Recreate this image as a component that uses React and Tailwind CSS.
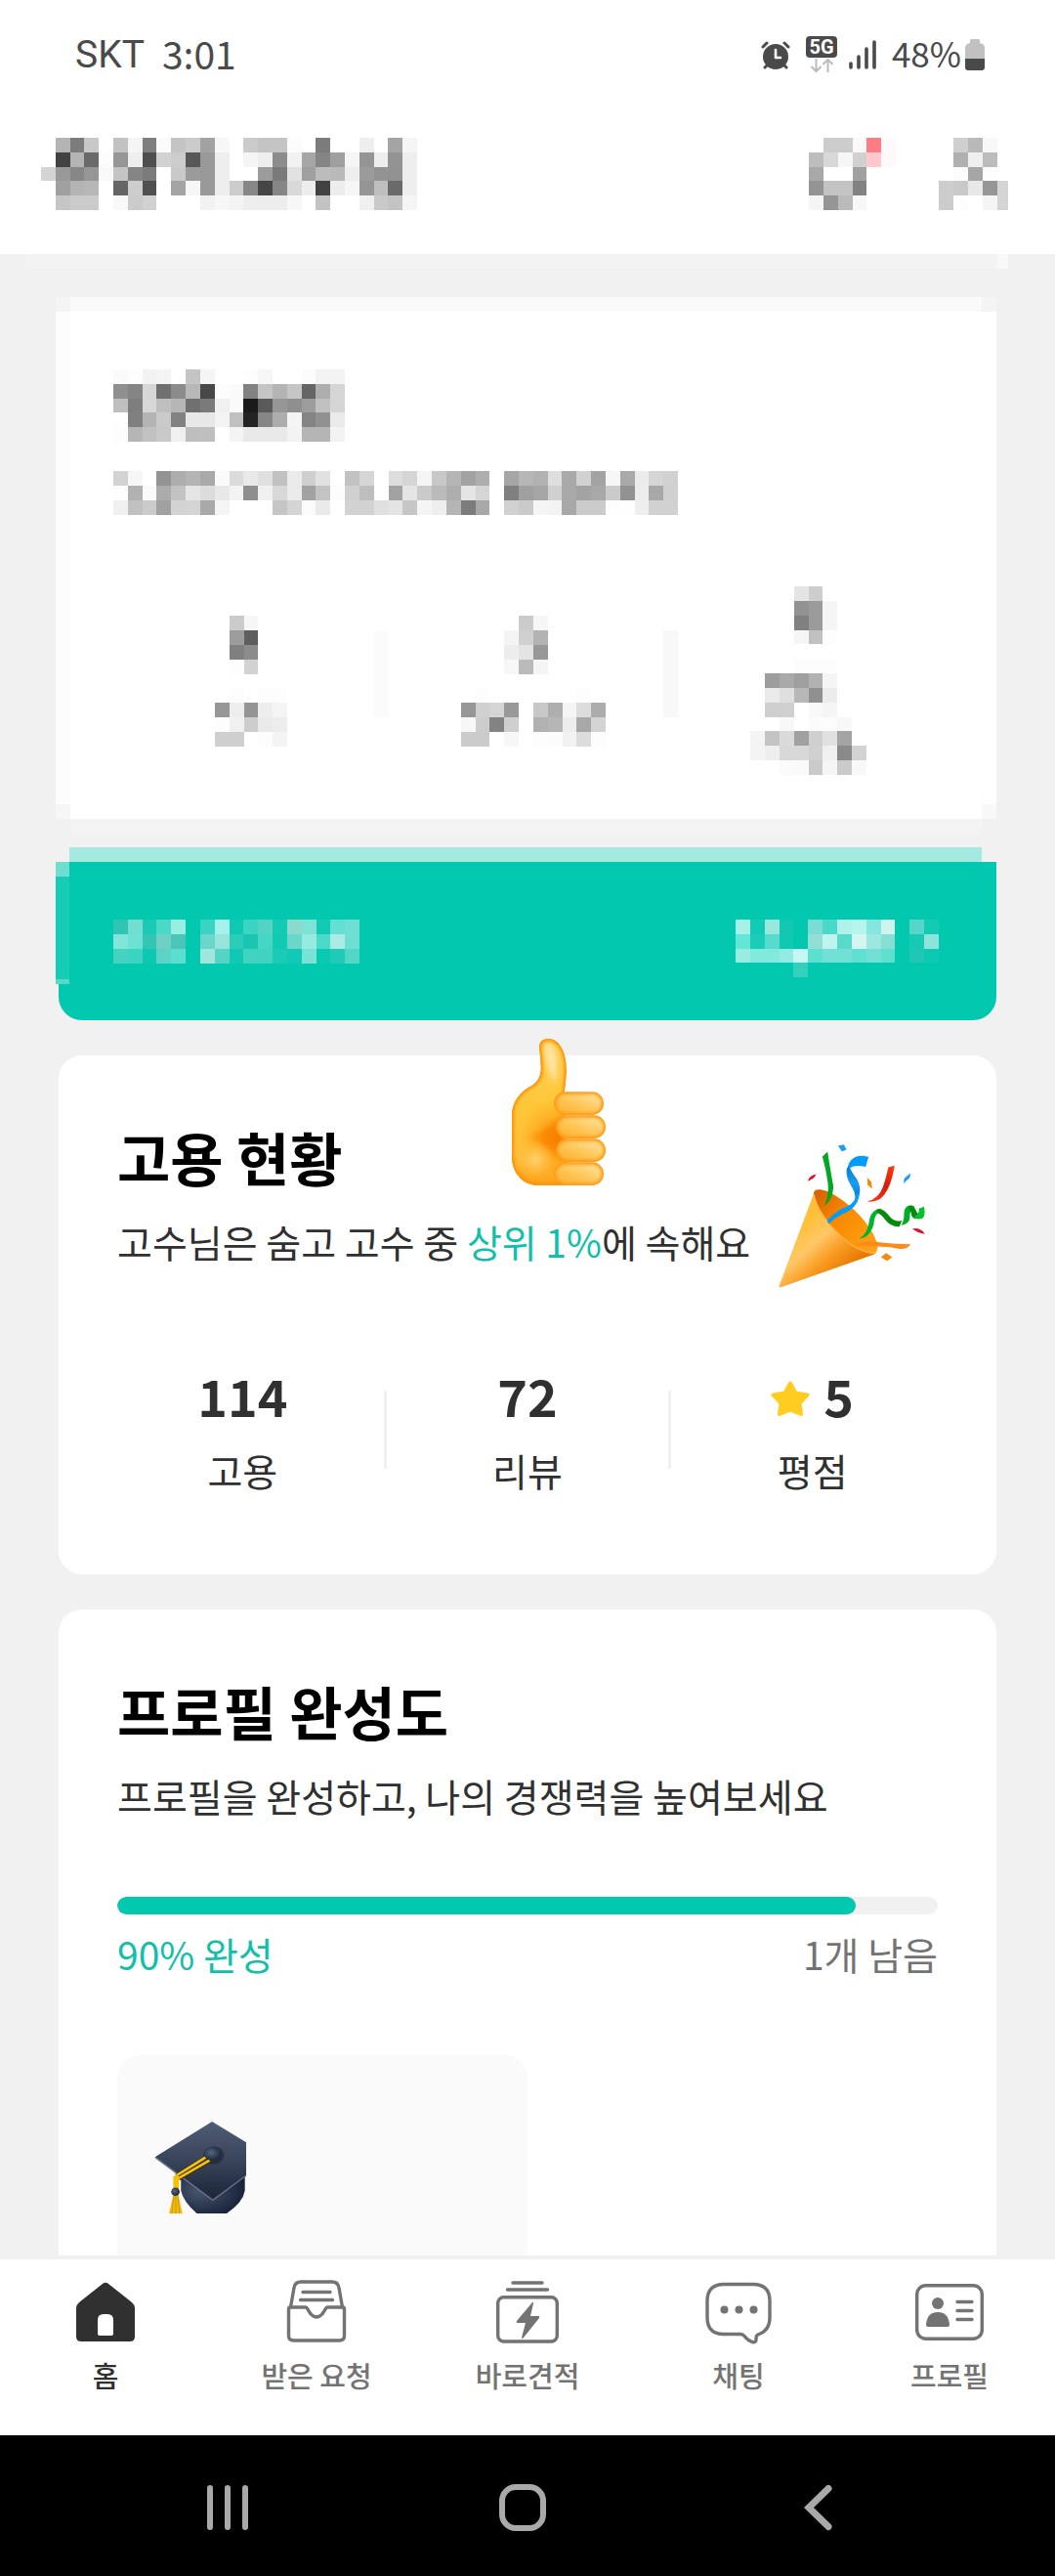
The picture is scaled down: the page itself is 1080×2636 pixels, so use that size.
import React from "react";

/* ---------- Pixelated blocks for private content ---------- */

const toColor = (v) => (v.length === 2 ? `#${v}${v}${v}` : `#${v}`);

function Mosaic({ rows, className }) {
  const cells = rows.map((r) => r.trim().split(/\s+/));
  const cols = Math.max(...cells.map((r) => r.length));
  return (
    <svg
      aria-hidden="true"
      viewBox={`0 0 ${cols} ${cells.length}`}
      preserveAspectRatio="none"
      shapeRendering="crispEdges"
      className={`block shrink-0 ${className}`}
    >
      {cells.map((row, y) =>
        row.map((v, x) =>
          v === "--" ? null : (
            <rect key={`${x}-${y}`} x={x} y={y} width="1" height="1" fill={toColor(v)} />
          )
        )
      )}
    </svg>
  );
}

const NAME = [
  "-- b4 7c c8 -- c2 f5 7f fb c4 cb a2 f7 -- cb c4 c4 fc -- 7c -- -- ee -- a4 f5",
  "-- 42 b4 6a fc 96 ee 4f d2 cc 57 99 ee -- f5 ee 8c f2 a6 85 9f f5 95 ee 93 ee",
  "d4 99 87 96 f9 c4 85 7b -- c9 9b 99 ee -- -- 9c 7a e2 9f bc b9 ee 9b 93 92 ee",
  "-- a0 b4 b7 -- 65 cc 50 -- a4 f6 99 ee cc 87 45 86 d9 ed 42 ed f6 95 bf 6a ee",
  "-- c6 cb cb -- f8 cb d1 -- -- -- f2 f7 f4 ed ed ed f7 -- c3 -- -- f0 c9 c3 f5",
];
const BELL = [
  "-- cc cc fdf8f8 ff7b85 fff9fb",
  "bd d8 f6 d2cfcf ffc8cc fff9fb",
  "a8 -- -- a1 -- --",
  "94 c3 c3 82 -- --",
  "f5 95 ba f7 -- --",
];
const PERSON = ["-- cf b9 f8", "-- b0 ef bc", "-- fc a6 fd", "cd c9 e8 96", "cc fd -- f5"];
const PERSON_EDGE = ["--", "--", "--", "d4", "d4"];
const SUMMARY_TITLE = [
  "fa fd f2 f4 -- c4 f5 -- -- fd f6 -- -- fc f3 f3",
  "8f 85 d7 70 8b b8 48 fc fa 82 c5 b4 c6 65 ae d5",
  "bf 7e d7 bf b6 70 7a f0 fa 1a 5a 96 8f 9c c0 d5",
  "-- 80 b4 ca 82 e8 e8 f3 c0 24 86 ad f4 84 91 ea",
  "fd b6 c1 c9 f0 be bf -- f4 e9 e9 e9 f3 b5 b5 f3",
];
const SUMMARY_TEXT = [
  "d3 f6 -- 93 ad b4 a9 fa db e9 e0 c1 eb cf e1 -- c2 d5 -- dd d5 f5 c8 b5 a2 ae -- a6 b6 b1 de a9 d1 a3 f6 a9 eb d5 d1",
  "fd b1 fa ab c2 e5 dc e8 f3 8f f0 d8 eb a2 c3 fc d0 be -- a2 e5 ca ba ae e5 d5 -- 80 a0 a6 d0 a9 a3 a8 cb 92 ec a8 d0",
  "f0 c1 cb a1 d3 d4 a9 f5 -- -- -- c6 d4 fb ea -- d2 d2 e0 e4 c6 f5 ee b5 7c a8 -- d1 ca f5 f3 a8 cb cb fd fe ee d1 d1",
];
const STAT_A = [
  "-- -- cb f6 -- --",
  "-- -- 9c 5e -- --",
  "-- -- 80 8c -- --",
  "-- -- fd d2 -- --",
  "-- -- -- -- -- --",
  "-- -- fd -- fd fd",
  "-- 96 ed 94 ed f4",
  "-- fd f0 cd ea ed",
  "-- cf cf -- fd f4",
];
const STAT_B = [
  "-- -- -- -- -- cb f6 -- -- -- --",
  "-- -- -- -- f4 d0 b3 -- -- -- --",
  "-- -- -- -- ed e4 98 -- -- -- --",
  "-- -- -- -- f7 ba f5 -- -- -- --",
  "-- -- -- -- -- -- -- -- -- -- --",
  "-- -- fd -- -- -- -- -- -- fd --",
  "-- 96 d0 d5 99 -- c8 ae f5 dd ac",
  "-- f7 cd 83 cf -- b1 b6 ed a8 d4",
  "-- cb cb -- f7 -- fd fc f2 dc fd",
];
const STAT_C = [
  "-- -- -- e4 cd -- -- --",
  "-- -- -- 92 9b f5 -- --",
  "-- -- -- 80 9b f5 -- --",
  "-- -- -- f6 c1 fd -- --",
  "-- -- -- -- -- -- -- --",
  "-- -- -- fd fd fd -- --",
  "-- 9d a9 9f b1 f5 -- --",
  "-- ea df b7 90 ec -- --",
  "-- cf cf -- f8 f5 -- --",
  "-- -- f8 -- fb fc f8 --",
  "f4 c3 da a1 cf e1 a4 --",
  "f4 ee d8 d8 d0 f0 8a d3",
  "-- -- fb fa ca f5 ca f8",
];
const CASH_LABEL = [
  "2fc5b3 72ddd1 1bcab6 4ad8c8 99eee3 -- 3bd3c1 a5f2ec 10c9b4 3bd3c1 53d3c3 13cab5 8cd9ce 7ee2d6 11cab4 65dfd3 6fdfd4",
  "82e5da 6ce1d4 34c6b5 6fd1c5 4ac5b7 -- 6bd7ca 96e4db 2bcdba 1ac6b1 45d6c4 11cab4 6bd7ca 94ebe0 4bdac9 a8ece4 6fdfd4",
  "45d3c1 3bd3c1 0dc9b3 5dd2c5 58dfcf -- a0e6dd 55d3c4 10c9b4 40d3c1 40d3c1 1bcab7 11c9b4 78e2d6 08c9b1 1fcbb8 52d6c7",
];
const CASH_VALUE = [
  "a6f0e8 13cab5 99e8df 13c8b3 -- 7adcd2 4ad8c8 aff2ea b5f5ee 86e5dc cdf5f0 -- 55d6c8 13cab5",
  "62e6d6 1bcdb8 55dccc 10c9b3 -- 94dfd5 bff3ed 58dacb d3f6f2 9ce7df 86ded4 -- 1ac9b5 8ce4da",
  "99ece2 82eadd 82eadd 94ebe1 c4f7f1 5ddfcf 72e0d4 72e0d4 5fe0d0 72e0d4 5fe0cf -- 1ec8b5 0bc9b3",
  "-- -- -- -- 33d0be -- -- -- -- -- -- -- -- --",
];

/* ---------- Status bar ---------- */

function StatusBar() {
  return (
    <div className="flex h-28 items-center justify-between pl-[77px] pr-[72px] text-[#4a4a4a]">
      <div className="flex items-center gap-[18px]">
        <span className="font-[Roboto,sans-serif] text-[39px] leading-[44px]">SKT</span>
        <span className="pb-1 text-[39px] leading-[44px]">3:01</span>
      </div>
      <div className="flex items-center">
        <svg viewBox="0 0 30 30" className="mr-4 h-[30px] w-[30px]" aria-hidden="true">
          <circle cx="15" cy="17" r="13" fill="#4a4a4a" />
          <path d="M2 7 6 3M28 7l-4-4M4 28l4-4M26 28l-4-4" stroke="#4a4a4a" strokeWidth="3" strokeLinecap="round" />
          <path d="M15 10v8h5" fill="none" stroke="#fff" strokeWidth="2.6" strokeLinecap="round" strokeLinejoin="round" />
        </svg>
        <svg viewBox="0 0 32 38" className="mr-3 h-[38px] w-8" aria-hidden="true">
          <rect width="32" height="22" rx="4" fill="#4a4a4a" />
          <text x="16" y="18" textAnchor="middle" fontFamily="Roboto" fontWeight="700" fontSize="20" fill="#fff">5G</text>
          <path d="M10.500 23v13m-5-5 5 5 5-5M22.500 37V24m-5 5 5-5 5 5" fill="none" stroke="#bcbcbc" strokeWidth="2" />
        </svg>
        <svg viewBox="0 0 28 30" className="mr-4 h-[30px] w-7" aria-hidden="true">
          <path d="M2 24v4M10 17v11M18 9v19M26 2v26" stroke="#4a4a4a" strokeWidth="3.600" strokeLinecap="round" />
        </svg>
        <span className="mr-1 pb-1 text-[35px] leading-[44px]">48%</span>
        <svg viewBox="0 0 20 32" className="h-8 w-5" aria-hidden="true">
          <path d="M5 1.500Q5 0 6.500 0h7Q15 0 15 1.500V4q5 1 5 5v11H0V9q0-4 5-5z" fill="#c1c1c1" />
          <path d="M0 20h20v9q0 3-3 3H3q-3 0-3-3z" fill="#4a4a4a" />
        </svg>
      </div>
    </div>
  );
}

/* ---------- Illustrations ---------- */

const THUMB_BODY =
  "M217 102C213 80 226 69 244 69c32 0 56 39 55 96-1 35-4 50-6 72l12 282h-92c-48 0-81-39-81-89V305c0-42 24-74 63-93 21-14 29-36 26-62 0-20-3-33-4-48z";

function ThumbsUp({ className }) {
  return (
    <svg viewBox="132 69 288 450" className={className} aria-hidden="true">
      <defs>
        <linearGradient id="tu-finger" x1="0" y1="1" x2="1" y2="0">
          <stop offset="0" stopColor="#ffb02e" />
          <stop offset="0.450" stopColor="#ffc656" />
          <stop offset="1" stopColor="#ffe3a0" />
        </linearGradient>
        <linearGradient id="tu-body" x1="0" y1="0" x2="0" y2="1">
          <stop offset="0" stopColor="#ffd45e" />
          <stop offset="0.450" stopColor="#ffc638" />
          <stop offset="0.800" stopColor="#ffbe3a" />
          <stop offset="1" stopColor="#ff9c12" />
        </linearGradient>
        <radialGradient id="tu-shade" cx="275" cy="372" r="120" gradientUnits="userSpaceOnUse">
          <stop offset="0" stopColor="#f57c00" />
          <stop offset="0.400" stopColor="#fb8700" stopOpacity="0.800" />
          <stop offset="1" stopColor="#ff9800" stopOpacity="0" />
        </radialGradient>
        <radialGradient id="tu-palm" cx="205" cy="440" r="55" gradientUnits="userSpaceOnUse">
          <stop offset="0" stopColor="#ffd272" />
          <stop offset="1" stopColor="#ffc044" stopOpacity="0" />
        </radialGradient>
        <filter id="tu-soft" x="-20%" y="-20%" width="140%" height="140%">
          <feGaussianBlur stdDeviation="8" />
        </filter>
        <filter id="tu-rim" x="-20%" y="-20%" width="140%" height="140%">
          <feGaussianBlur stdDeviation="4" />
        </filter>
        <clipPath id="tu-clip">
          <path d={THUMB_BODY} />
        </clipPath>
      </defs>
      <g clipPath="url(#tu-clip)">
        <rect x="130" y="60" width="200" height="470" fill="url(#tu-body)" />
        <path d="M234 95c2-16 20-14 28 8 10 26 10 60 2 100-14-24-30-60-30-108z" fill="#ffe4a4" filter="url(#tu-soft)" />
        <path d="M160 368q60 0 130-70v160q-60-80-130-90z" fill="url(#tu-shade)" filter="url(#tu-soft)" />
        <circle cx="275" cy="372" r="120" fill="url(#tu-shade)" opacity="0.600" />
        <circle cx="205" cy="440" r="55" fill="url(#tu-palm)" />
        <path d={THUMB_BODY} fill="none" stroke="#ff930a" strokeWidth="14" filter="url(#tu-rim)" />
        <path d={THUMB_BODY} fill="none" stroke="#ff980f" strokeWidth="5" />
      </g>
      {[[261, 232], [267, 304], [267, 376], [261, 448]].map(([x, y]) => (
        <g key={y}>
          <rect x={x} y={y} width="153" height="71" rx="35" fill="#ff9a14" />
          <rect x={x + 7} y={y + 7} width="139" height="57" rx="28" fill="url(#tu-finger)" filter="url(#tu-rim)" />
        </g>
      ))}
    </svg>
  );
}

function PartyPopper({ className }) {
  return (
    <svg viewBox="950 393 451 441" className={className} aria-hidden="true">
      <defs>
        <linearGradient id="pp-cone" x1="1020" y1="640" x2="1150" y2="790" gradientUnits="userSpaceOnUse">
          <stop offset="0" stopColor="#ffc038" />
          <stop offset="0.350" stopColor="#ffc766" />
          <stop offset="0.650" stopColor="#f99d22" />
          <stop offset="1" stopColor="#e87700" />
        </linearGradient>
        <linearGradient id="pp-in" x1="1060" y1="560" x2="1250" y2="720" gradientUnits="userSpaceOnUse">
          <stop offset="0" stopColor="#d96500" />
          <stop offset="0.400" stopColor="#f98a00" />
          <stop offset="1" stopColor="#ffa41c" />
        </linearGradient>
        <linearGradient id="pp-blue" x1="0" y1="0" x2="0" y2="1">
          <stop offset="0" stopColor="#0078dc" />
          <stop offset="0.500" stopColor="#18a0ec" />
          <stop offset="1" stopColor="#0072d2" />
        </linearGradient>
        <linearGradient id="pp-red" x1="1300" y1="460" x2="1240" y2="570" gradientUnits="userSpaceOnUse">
          <stop offset="0" stopColor="#ff3a0a" />
          <stop offset="0.500" stopColor="#d81a08" />
          <stop offset="1" stopColor="#f43a1c" />
        </linearGradient>
      </defs>
      <path d="M1058 545c0-20 32-17 67 5 65 40 122 105 130 155 2 20-10 28-40 17-65-22-145-112-157-177z" fill="url(#pp-in)" />
      <path d="M1058 545c12 65 92 155 157 177 20 7 33 6 38 0l-8 9-290 102-4-3z" fill="url(#pp-cone)" />
      <path d="M1058 545c12 65 92 155 157 177 18 6 30 6 36 3" fill="none" stroke="#ffb24e" strokeWidth="4" />
      <path d="M1085 430l16-15q9 60 18 108-2 40-29 59 16-34 12-70-6-44-17-82z" fill="#00a824" />
      <path d="M1160 480q4-54 50-52l17 3-9 31q-32-8-50 4z" fill="#009dff" />
      <path d="M1160 466q-4 26 12 52 16 22 14 46l12-14q8-26-8-52-18-24-22-38z" fill="url(#pp-blue)" />
      <path d="M1198 540q4 34-32 58-44 20-62 40l-4-12q28-30 64-44 24-14 24-34z" fill="#009dff" />
      <path d="M1288 463l19-5q-12 78-46 104-20 10-39 6 36-6 50-46 9-26 16-59z" fill="url(#pp-red)" />
      <path d="M1199 682q26-14 30-54 6-38 40-38l-14 14q-10 10-12 34-12 42-44 44z" fill="#00b52e" />
      <path d="M1254 592q18-4 34 18 20 26 42 16l-8 20q-26 2-46-24-12-16-24-18z" fill="#058a0c" />
      <path d="M1328 642q10-20 8-36 0-24 22-26l12 4q-18 10-16 34 0 18-26 24z" fill="#00ad2a" />
      <path d="M1350 582q18-2 24 16 4 12 10 8l-8 14q-16 4-18-16z" fill="#058a0c" />
      <path d="M1382 590l16-6q6 36-10 38-16 2-20-8 16-4 14-24z" fill="#00c22e" />
      <path d="M1180 704q38-20 80-10 50 6 96 6-8 16-34 14-40-8-142-10z" fill="#ff8a14" />
      <path d="M1133 397l18-4 8 16-14 5z" fill="#1c9cf2" />
      <path d="M1337 497l19-16-2 14-19 18z" fill="#1c9cf2" />
      <path d="M1223 495l13 14 2 20-14-12z" fill="#f68a0c" />
      <path d="M1265 740l16-13 19 13-16 11z" fill="#f68a0c" />
      <path d="M1040 506q4-18 26-22-6 14-26 22z" fill="#dc1028" />
      <path d="M1362 652q26-4 38 16-22-2-38-16z" fill="#e01030" />
    </svg>
  );
}

function GraduationCap({ className }) {
  return (
    <svg viewBox="175 272 281 283" className={className} aria-hidden="true">
      <defs>
        <linearGradient id="gc-top" x1="0" y1="0" x2="0" y2="1">
          <stop offset="0" stopColor="#4e5c74" />
          <stop offset="0.500" stopColor="#38445a" />
          <stop offset="1" stopColor="#1c2436" />
        </linearGradient>
        <radialGradient id="gc-base" cx="0.300" cy="0.400" r="0.800">
          <stop offset="0" stopColor="#46566e" />
          <stop offset="0.600" stopColor="#27334a" />
          <stop offset="1" stopColor="#141c30" />
        </radialGradient>
        <radialGradient id="gc-knob" cx="0.400" cy="0.400" r="0.600">
          <stop offset="0" stopColor="#566580" />
          <stop offset="1" stopColor="#1f293c" />
        </radialGradient>
      </defs>
      <path d="M256 440h197v45q-6 36-56 70h-92q-42-36-49-70z" fill="url(#gc-base)" />
      <path d="M176 381L352 272l180 110-178 133z" fill="url(#gc-top)" />
      <path d="M178 383l176 131 178-131" fill="none" stroke="#66738a" strokeWidth="4" />
      <ellipse cx="357" cy="376" rx="32" ry="27" fill="#141c2c" opacity="0.500" />
      <path d="M242 440L338 382M249 447L348 390" fill="none" stroke="#3c3218" strokeWidth="15" />
      <path d="M241 478V439L332 382M249 446L344 391" fill="none" stroke="#f8c210" strokeWidth="8" />
      <path d="M241 480V440" stroke="#f9c000" strokeWidth="17" />
      <path d="M233 495h14l14 60h-42z" fill="#f3bd10" />
      <path d="M234 500l-6 55M240 498v57M246 500l6 55" stroke="#c89408" strokeWidth="3" />
      <ellipse cx="354" cy="372" rx="26" ry="20" fill="url(#gc-knob)" />
      <circle cx="239" cy="488" r="13" fill="url(#gc-knob)" />
    </svg>
  );
}

function Star() {
  return (
    <svg viewBox="0 -6 40 42" className="h-[42px] w-10" aria-hidden="true">
      <path
        d="M20 2.500 25.500 12.500 37.500 14.500 29.500 23 31 34 20 29.500 9 34 10.500 23 2.500 14.500 14.500 12.500z"
        fill="#ffcd22"
        stroke="#ffcd22"
        strokeWidth="4"
        strokeLinejoin="round"
      />
    </svg>
  );
}

/* ---------- Tab icons ---------- */

const line = { fill: "none", stroke: "#737373", strokeWidth: 3.4, strokeLinecap: "round", strokeLinejoin: "round" };

const icons = {
  home: (
    <path
      fillRule="evenodd"
      fill="#303030"
      d="M33 7q3-2.500 6 0l24 19q3 2.500 3 6v29q0 5-5 5H11q-5 0-5-5V32q0-3.500 3-6zM28 58q0 2 2 2h12q2 0 2-2V44q0-6-6-6h-4q-6 0-6 6z"
    />
  ),
  inbox: (
    <g {...line}>
      <path d="M9 31q-1.500 0-1.500 2v27q0 5 5 5h47q5 0 5-5V33q0-2-1.500-2H47q-1 0-2 2-4 8-9 8t-9-8q-1-2-2-2z" />
      <path d="M9.500 31 13 11q1-6 7-6h32q6 0 7 6l3.500 20M22 15.500h28M19.500 23.500h33" />
    </g>
  ),
  quote: (
    <g>
      <path {...line} d="M21 6h30M15.500 13h41" />
      <rect {...line} x="5.700" y="20.700" width="60.600" height="45.300" rx="6" />
      <path d="M41 26 25 45q-1 2 1 2h8l-4 15q0 2 2 0l16-20q1-2-1-2h-8l3-13q0-2-1-1z" fill="#737373" />
    </g>
  ),
  chat: (
    <g>
      <path
        {...line}
        d="M21 7.500h30q17 0 17 17v17q0 13-11 17-3 1-3 4v2q-.500 3-4 2-4-1-7-5-2.500-3-5-3H21q-17 0-17-17v-17q0-17 17-17z"
      />
      <g fill="#737373">
        <circle cx="21.500" cy="33.500" r="4" />
        <circle cx="36.500" cy="33.500" r="4" />
        <circle cx="51.500" cy="33.500" r="4" />
      </g>
    </g>
  ),
  profile: (
    <g>
      <rect {...line} x="2.700" y="8.700" width="66.600" height="54.600" rx="9" />
      <path {...line} d="M44 25.500h15M44 34.500h15M44 43.500h15" />
      <circle cx="24" cy="27" r="6" fill="#737373" />
      <path d="M12 49q1-13 12-13t12 13q0 2-2 2H14q-2 0-2-2z" fill="#737373" />
    </g>
  ),
};

const tabs = [
  { id: "home", label: "홈", active: true },
  { id: "inbox", label: "받은 요청" },
  { id: "quote", label: "바로견적" },
  { id: "chat", label: "채팅" },
  { id: "profile", label: "프로필" },
];

/* ---------- Sections ---------- */

function Header() {
  return (
    <header className="bg-white">
      <StatusBar />
      <div className="flex items-center justify-between pb-[45px] pl-[42px] pr-12 pt-[29px]">
        <Mosaic rows={NAME} className="h-[74px] w-[385px]" />
        <div className="flex gap-11">
          <button type="button" aria-label="알림">
            <Mosaic rows={BELL} className="h-[74px] w-[89px]" />
          </button>
          <button type="button" aria-label="내 정보" className="flex">
            <Mosaic rows={PERSON} className="h-[74px] w-[60px]" />
            <Mosaic rows={PERSON_EDGE} className="h-[74px] w-[11px]" />
          </button>
        </div>
      </div>
    </header>
  );
}

function SummaryCard() {
  return (
    <section className="ml-[57px] mr-[60px]">
      <div className="flex h-[15px]">
        <div className="w-[15px] bg-[#f4f4f4]" />
        <div className="flex-1 bg-[#fafafa]" />
        <div className="w-[15px] bg-[#f4f4f4]" />
      </div>
      <div className="border-l-[15px] border-[#fdfdfd] bg-white pb-[30px] pl-11 pr-[59px] pt-[59px]">
        <Mosaic rows={SUMMARY_TITLE} className="h-[74px] w-[237px]" />
        <Mosaic rows={SUMMARY_TEXT} className="mt-[30px] h-[45px] w-[578px]" />
        <div className="mt-[73px] grid grid-cols-[267fr_15px_282fr_15px_267fr] items-center justify-items-center">
          <Mosaic rows={STAT_A} className="h-[134px] w-[89px]" />
          <div className="mt-[45px] h-[89px] w-full self-start bg-[#fbfbfb]" />
          <Mosaic rows={STAT_B} className="h-[134px] w-[163px]" />
          <div className="mt-[45px] h-[89px] w-full self-start bg-[#f8f8f8]" />
          <Mosaic rows={STAT_C} className="h-[193px] w-[119px]" />
        </div>
      </div>
      <div className="flex h-[15px]">
        <div className="w-[15px] bg-[#f6f6f6]" />
        <div className="flex-1 bg-white" />
        <div className="w-[15px] bg-[#f8f8f8]" />
      </div>
      <div className="mx-[15px] h-[15px] bg-[#f3f3f3]" />
    </section>
  );
}

function CashButton() {
  return (
    <div className="mt-[14px]">
      <div className="ml-[71px] mr-[75px] h-[15px] bg-[#a5eae1]" />
      <button
        type="button"
        aria-label="캐시"
        className="relative mx-[60px] flex w-[calc(100%-120px)] items-start justify-between rounded-b-3xl bg-[#02c8b0] pb-[44px] pl-14 pr-[59px] pt-[59px]"
      >
        <Mosaic rows={CASH_LABEL} className="h-[45px] w-[252px]" />
        <Mosaic rows={CASH_VALUE} className="h-[59px] w-[208px]" />
        <span className="absolute -left-[3px] top-0 flex h-[125px] w-[14px] flex-col">
          <span className="h-[15px] bg-[#6fddcf]" />
          <span className="flex-1 bg-[#17ccb4]" />
          <span className="h-[5px] bg-[#58d8c6]" />
        </span>
      </button>
    </div>
  );
}

function Stat({ value, label, icon }) {
  return (
    <div className="flex flex-col items-center text-[#303030]">
      <dd className="order-1 flex items-center gap-[14px] text-[52px] font-bold leading-[72px]">
        {icon}
        {value}
      </dd>
      <dt className="order-2 mt-[10px] text-[39px] leading-[60px]">{label}</dt>
    </div>
  );
}

const Divider = () => <div className="h-20 w-[3px] bg-[#f1f1f1]" />;

function HiringCard() {
  return (
    <section className="relative mx-[60px] mt-9 rounded-3xl bg-white px-[60px] pb-[77px] pt-16">
      <h2 className="text-[59px] font-bold leading-[80px] text-black">고용 현황</h2>
      <p className="mt-4 text-[39px] leading-[60px] text-[#303030]">
        고수님은 숨고 고수 중 <span className="text-[#12bfa9]">상위 1%</span>에 속해요
      </p>
      <dl className="-mx-4 mt-[92px] grid grid-cols-[1fr_3px_1fr_3px_1fr] items-center">
        <Stat value="114" label="고용" />
        <Divider />
        <Stat value="72" label="리뷰" />
        <Divider />
        <Stat value="5" label="평점" icon={<Star />} />
      </dl>
      <ThumbsUp className="absolute -top-[17px] left-[464px] h-[150px] w-24" />
      <PartyPopper className="absolute right-[73px] top-[91px] h-[147px] w-[150px]" />
    </section>
  );
}

function ProfileCard() {
  const done = 90;
  return (
    <section className="mx-[60px] mt-9 rounded-t-3xl bg-white px-[60px] pt-16">
      <h2 className="text-[59px] font-bold leading-[80px] text-black">프로필 완성도</h2>
      <p className="mt-4 text-[39px] leading-[60px] text-[#303030]">프로필을 완성하고, 나의 경쟁력을 높여보세요</p>
      <div
        role="progressbar"
        aria-label="프로필 완성도"
        aria-valuenow={done}
        aria-valuemin={0}
        aria-valuemax={100}
        className="mt-[74px] h-[18px] overflow-hidden rounded-full bg-[#f1f1f1]"
      >
        <div className="h-full rounded-full bg-[#02c8b0]" style={{ width: `${done}%` }} />
      </div>
      <div className="mt-[10px] flex justify-between text-[39px] leading-[60px]">
        <span className="text-[#12bfa9]">{done}% 완성</span>
        <span className="text-[#737373]">1개 남음</span>
      </div>
      <div className="mt-[74px] w-1/2 rounded-t-3xl bg-[#fafafa] pb-[43px] pl-[38px] pt-[68px]">
        <GraduationCap className="h-[94px] w-[94px]" />
      </div>
    </section>
  );
}

function TabBar() {
  return (
    <nav className="grid grid-cols-5 border-t-4 border-[#f1f1f1] bg-white pb-[42px] pt-[18px]">
      {tabs.map((t) => (
        <a key={t.id} href={`#${t.id}`} aria-current={t.active ? "page" : undefined} className="flex flex-col items-center">
          <svg viewBox="0 0 72 72" className="h-[72px] w-[72px]" aria-hidden="true">
            {icons[t.id]}
          </svg>
          <span
            className={
              t.active
                ? "mt-2 text-[29px] font-medium leading-[40px] text-[#303030]"
                : "mt-2 text-[29px] font-medium leading-[40px] text-[#737373]"
            }
          >
            {t.label}
          </span>
        </a>
      ))}
    </nav>
  );
}

function SystemBar() {
  const s = { fill: "none", stroke: "#a9a9a9", strokeWidth: 6, strokeLinecap: "round" };
  return (
    <div className="grid h-36 grid-cols-3 place-items-center bg-black pl-[82px] pr-[91px] pt-1">
      <button type="button" aria-label="최근 앱">
        <svg viewBox="0 0 48 48" className="h-12 w-12">
          <path {...s} d="M6 4v40M24 4v40M42 4v40" />
        </svg>
      </button>
      <button type="button" aria-label="홈 화면">
        <svg viewBox="0 0 48 48" className="h-12 w-12">
          <rect {...s} x="3" y="3" width="42" height="42" rx="14" />
        </svg>
      </button>
      <button type="button" aria-label="뒤로">
        <svg viewBox="0 0 48 48" className="h-12 w-12">
          <path {...s} strokeWidth="7" d="M34 4.500 14 24l20 19.500" strokeLinejoin="miter" />
        </svg>
      </button>
    </div>
  );
}

export default function App() {
  return (
    <div className="flex min-h-screen flex-col bg-[#f1f1f1] font-['Noto_Sans_CJK_KR',sans-serif]">
      <Header />
      <main className="flex-1">
        <div className="mb-[29px] ml-[27px] mr-12 flex h-[15px] justify-end bg-[#f3f3f3]">
          <div className="w-[11px] bg-[#f8f8f8]" />
        </div>
        <SummaryCard />
        <CashButton />
        <HiringCard />
        <ProfileCard />
      </main>
      <TabBar />
      <SystemBar />
    </div>
  );
}
